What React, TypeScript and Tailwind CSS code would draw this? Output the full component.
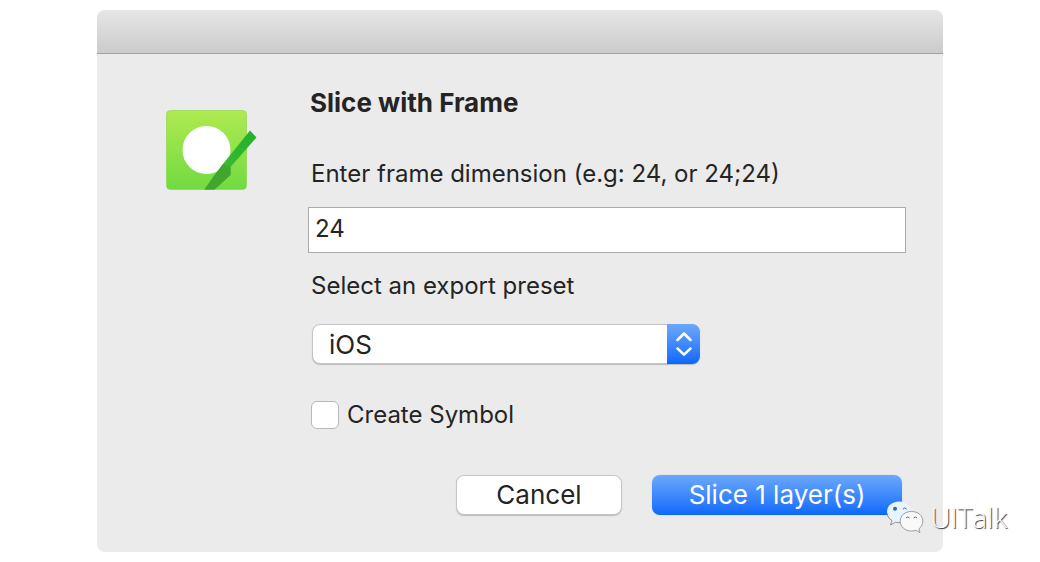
import { useState } from "react";

function AppIcon() {
  return (
    <svg className="block h-[82px] w-[92px]" viewBox="0 0 92 82" aria-hidden="true">
      <defs>
        <linearGradient id="tile" x1="0" y1="0" x2="0" y2="1">
          <stop offset="0" stopColor="#aeea50" />
          <stop offset="1" stopColor="#72da41" />
        </linearGradient>
        <linearGradient id="knife" x1="1" y1="0" x2="0" y2="1">
          <stop offset="0" stopColor="#1fb22c" />
          <stop offset="1" stopColor="#4dbb30" />
        </linearGradient>
      </defs>
      <rect x="0.5" y="0.5" width="80" height="79" rx="4" fill="url(#tile)" stroke="#86d444" strokeWidth="0.6" />
      <circle cx="40.500" cy="40" r="24" fill="#fff" />
      <path d="M84 20.500 L90.500 27.500 L64.500 57 L64.500 65 L48.500 79.500 L38.500 79.500 Q47 67 57 54 Z" fill="url(#knife)" />
      <path d="M57 54 L64.500 57 L64.500 65 L48.500 79.500 L38.500 79.500 Q47 67 57 54 Z" fill="#42a52d" />
    </svg>
  );
}

function WeChatMark() {
  return (
    <svg className="block h-[34px] w-[38px]" viewBox="0 0 38 34" aria-hidden="true">
      <path
        d="M13 1.500 C6 1.500 1 6 1 12 C1 15.500 3 18.500 6 20.500 L4.500 25 L9.500 22.200 C11 22.600 12.500 22.700 14 22.600 L25.500 11.500 C24 5.500 19 1.500 13 1.500 Z"
        fill="#e6f5ff"
      />
      <path d="M1 13 C1.200 16 3 18.800 6 20.500 L4.500 25 L9.500 22.200 C11 22.600 12.500 22.700 14 22.600" fill="none" stroke="#777" strokeWidth="0.8" />
      <path
        d="M25.500 11.500 C19 11.500 14.200 15.500 14.200 21.200 C14.200 26.700 19 31 25.500 31 C27 31 28.400 30.700 29.800 30.300 L34 32.500 L32.900 28.800 C35.300 27 36.800 24.300 36.800 21.200 C36.800 15.500 32 11.500 25.500 11.500 Z"
        fill="#f9f9f9"
        stroke="#888"
        strokeWidth="0.8"
      />
      <circle cx="9" cy="8.800" r="2" fill="#376b9e" />
      <path d="M16.800 9.200 Q18.700 6.600 20.700 9.200 M20 18 Q21.800 15.800 23.500 18 M27.500 18 Q29.300 15.800 31 18" fill="none" stroke="#667" strokeWidth="1" />
    </svg>
  );
}

export default function App() {
  const [dimension, setDimension] = useState("24");
  const [preset, setPreset] = useState("iOS");
  const [symbol, setSymbol] = useState(false);

  return (
    <main className="min-h-screen bg-white px-[97px] pt-[10px] font-['Inter',sans-serif] text-2xl leading-8 text-[#242424]">
      <section className="relative rounded-lg bg-[#ebebeb]" aria-labelledby="dialog-title">
        <header className="h-11 rounded-t-lg border-b border-[#a3a3a3] bg-linear-to-b from-[#e6e6e6] to-[#cbcbcb]" />
        <div className="flex pr-[37px] pb-[37px] pl-[69px]">
          <div className="w-[142px] shrink-0 pt-14">
            <AppIcon />
          </div>
          <form className="min-w-0 flex-1 pt-[33px]" onSubmit={(e) => e.preventDefault()}>
            <h1 id="dialog-title" className="pl-0.5 text-[26px] leading-8 font-bold">
              Slice with Frame
            </h1>
            <label htmlFor="dimension" className="mt-[39px] block pl-[3px]">
              Enter frame dimension (e.g: 24, or 24;24)
            </label>
            <input
              id="dimension"
              type="text"
              value={dimension}
              onChange={(e) => setDimension(e.target.value)}
              className="mt-[17px] block h-[46px] w-full border border-[#ababab] bg-white px-1.5 pb-1 outline-none"
            />
            <label htmlFor="preset" className="mt-[17px] block pl-[3px]">
              Select an export preset
            </label>
            <div className="mt-[22px] ml-1 grid w-[388px] max-w-full">
              <select
                id="preset"
                value={preset}
                onChange={(e) => setPreset(e.target.value)}
                className="col-start-1 row-start-1 h-10 w-full appearance-none rounded-lg border border-[#c4c4c4] bg-white pt-0.5 pl-4 text-[26px] leading-8 shadow-[0_1px_1px_rgba(0,0,0,0.2)] outline-none"
              >
                <option>iOS</option>
                <option>Android</option>
              </select>
              <span className="pointer-events-none col-start-1 row-start-1 flex h-10 w-[33px] items-center justify-center justify-self-end rounded-r-lg bg-linear-to-b from-[#6ba7fb] to-[#0768fc]">
                <svg className="h-6 w-4" viewBox="0 0 16 24" fill="none" stroke="#fff" strokeWidth="2.5" strokeLinecap="round" strokeLinejoin="round" aria-hidden="true">
                  <path d="M1.500 8 L8 1.500 L14.500 8 M1.500 16.500 L8 22.700 L14.500 16.500" />
                </svg>
              </span>
            </div>
            <label className="mt-[35px] ml-[3px] flex w-fit items-center gap-2">
              <input
                type="checkbox"
                checked={symbol}
                onChange={(e) => setSymbol(e.target.checked)}
                className="size-7 appearance-none rounded-md border border-[#b8b8b8] bg-white checked:bg-[#0768fc]"
              />
              Create Symbol
            </label>
            <div className="mt-11 flex justify-end gap-[30px] pr-1 text-[26px] leading-8">
              <button type="button" className="h-10 w-[166px] rounded-lg border border-[#c4c4c4] bg-white shadow-[0_1px_1px_rgba(0,0,0,0.2)]">
                Cancel
              </button>
              <button type="submit" className="h-10 w-[250px] rounded-lg bg-linear-to-b from-[#6ba7fb] to-[#0768fc] text-white shadow-[0_0_2px_#b9dcff]">
                Slice 1 layer(s)
              </button>
            </div>
          </form>
        </div>
        <div className="absolute -right-16 bottom-[18px] flex items-center gap-1.5">
          <WeChatMark />
          <span className="font-['Open_Sans',sans-serif] text-[28px] leading-8 font-light text-white [text-shadow:1px_1px_1px_#333]">UITalk</span>
        </div>
      </section>
    </main>
  );
}
